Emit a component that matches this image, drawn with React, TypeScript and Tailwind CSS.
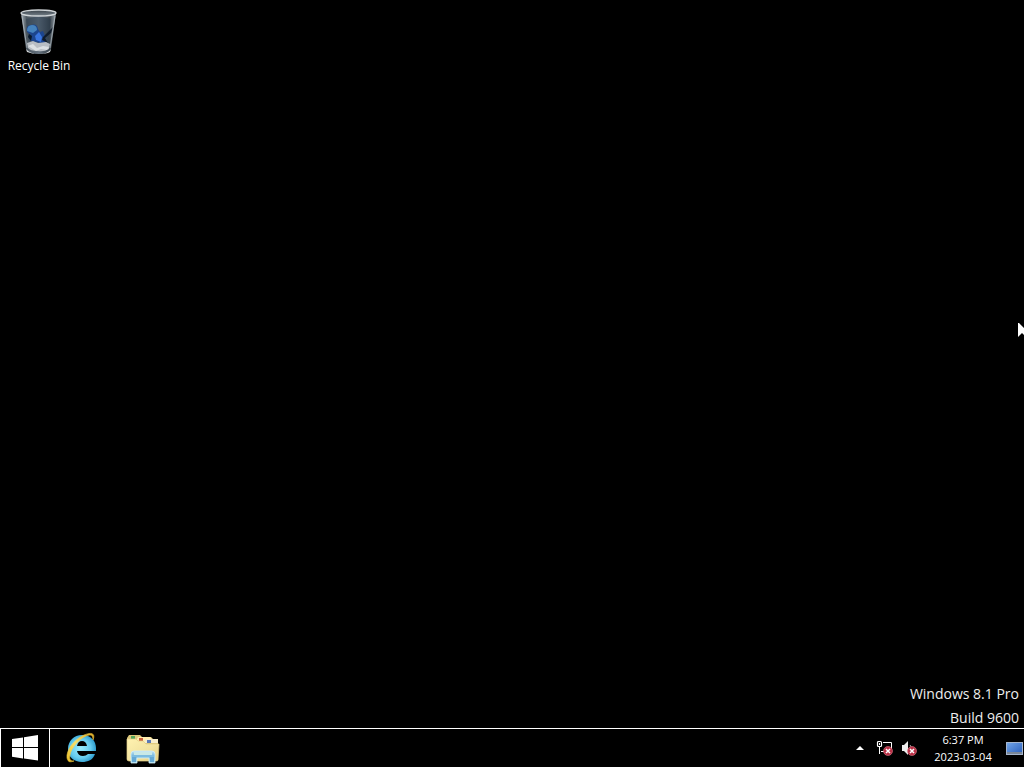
import React from "react";

function RecycleBinIcon() {
  return (
    <svg width="48" height="48" viewBox="0 0 48 48" aria-hidden="true">
      <defs>
        <linearGradient id="glass" x1="0" x2="1" y1="0" y2="0">
          <stop offset="0" stopColor="#a3adb5" />
          <stop offset="0.16" stopColor="#4b565f" />
          <stop offset="0.5" stopColor="#65727f" />
          <stop offset="0.82" stopColor="#39434c" />
          <stop offset="1" stopColor="#9aa4ab" />
        </linearGradient>
        <linearGradient id="inner" x1="0" x2="0" y1="0" y2="1">
          <stop offset="0" stopColor="#39424a" />
          <stop offset="1" stopColor="#77828b" />
        </linearGradient>
      </defs>
      <path d="M6 7 L11 43 Q12 48 24 48 Q35 48 36 43 L41 7Z" fill="url(#glass)" />
      <path d="M11 13 L24 10 36 13 33 39H14Z" fill="#24384a" opacity=".4" />
      <path d="M12 26 Q10 20 16 19 Q22 17 23 23 L25 26 28 25 30 30 31 36 26 38 22 36 19 37 15 34 16 29Z" fill="#1c458d" />
      <path d="M12 25 Q12 19 17 19 Q22 19 22 24 L18 27Z" fill="#4583bd" />
      <path d="M20 30 L24 26 27 31 26 36 21 34Z" fill="#3975df" />
      <path d="M28 31 L38 21 36 27 30 32 33 37 27 34Z" fill="#101c2a" />
      <path d="M14 28l3 2-1 5-3-4Z" fill="#08182b" />
      <path d="M12 37 L18 35 23 37 31 36 35 38 34 43 Q29 46 23 45 Q15 45 13 42Z" fill="#b9bec4" />
      <path d="M13 40l5-2 4 4 6-2 6 1-2 3-6-1-5 2Z" fill="#e5e8eb" opacity=".8" />
      <path d="M11 43Q15 48 24 48T36 43L35 46Q31 48 24 48T12 46Z" fill="#d5d8da" />
      <ellipse cx="23.5" cy="7" rx="17.5" ry="3" fill="url(#inner)" stroke="#d0d5d8" strokeWidth="1.3" />
      <path d="M7 10 L12 42M40 10 L35 42" stroke="#b4bdc3" strokeWidth="1" opacity=".7" />
    </svg>
  );
}

function WindowsLogo() {
  return (
    <svg width="26" height="26" viewBox="0 0 26 26" fill="white" aria-hidden="true">
      <path d="M0 4 L11 2.4V12H0Z M12 2.2 L26 0V12H12Z M0 13H11V23.4L0 21.8Z M12 13H26V25.5L12 23.5Z" />
    </svg>
  );
}

function ExplorerLogo() {
  return (
    <svg width="32" height="32" viewBox="0 0 32 32" aria-hidden="true">
      <defs>
        <radialGradient id="ieBlue" cx=".45" cy=".5" r=".6">
          <stop offset="0" stopColor="#9cecfd" />
          <stop offset="0.6" stopColor="#66ccef" />
          <stop offset="1" stopColor="#2290c4" />
        </radialGradient>
        <linearGradient id="ieGold" x1="0" x2="1" y1="1" y2="0">
          <stop offset="0" stopColor="#e9bd28" />
          <stop offset="0.5" stopColor="#f8e069" />
          <stop offset="1" stopColor="#dcaa25" />
        </linearGradient>
      </defs>
      <path fillRule="evenodd" fill="url(#ieBlue)" d="M17 3C26 3 31 9 31 16V19H12Q13 24 18 24Q21 24 23 22H30C28 28 23 30 17 30C9 30 3 25 3 17S9 3 17 3ZM12 14H22Q21 9 17 9T12 14Z" />
      <path d="M28 8C31 1 26 0 19 3C8 8 1 19 2 26C3 31 6 30 9 29C5 29 4 27 5 23C6 16 14 7 21 4C26 2 28 3 28 8Z" fill="url(#ieGold)" stroke="url(#ieGold)" strokeWidth=".6" />
    </svg>
  );
}

function FolderIcon() {
  return (
    <svg width="34" height="32" viewBox="0 0 34 32" aria-hidden="true">
      <defs>
        <linearGradient id="folder" x1="0" x2="1" y1="0" y2="1">
          <stop offset="0" stopColor="#fff2b0" />
          <stop offset="0.55" stopColor="#f2e3a0" />
          <stop offset="1" stopColor="#e5cf80" />
        </linearGradient>
        <linearGradient id="stand" x1="0" x2="0" y1="0" y2="1">
          <stop offset="0" stopColor="#c4e5f3" />
          <stop offset="0.4" stopColor="#78b9df" />
          <stop offset="1" stopColor="#a9dced" />
        </linearGradient>
      </defs>
      <path d="M1 5L3 2H14L16 4H25L27 6H32V27H1Z" fill="#dcc87c" />
      <path d="M5 3H9V6H5Z" fill="#55a55a" />
      <path d="M10 8L12 4H24L26 6H32V10H10Z" fill="#ffedaf" />
      <path d="M13 5H17V8H13Z" fill="#c95c3a" />
      <path d="M18 10L20 6H32V10H18Z" fill="#f7edcc" />
      <path d="M21 7H25V10H21Z" fill="#5b79b6" />
      <path d="M1 6H10L12 8H17L20 11H33L32 27Q32 28 30 28H3Q1 28 1 26Z" fill="url(#folder)" stroke="#e3cf87" strokeWidth=".7" />
      <path d="M5 30V21Q5 18 8 18H26Q29 18 29 21V30H23V25H11V30Z" fill="url(#stand)" stroke="#d2eff7" strokeWidth=".8" />
      <path d="M8 19H26V22H8Z" fill="#c9e9e7" />
      <path d="M6 24H10V29H6ZM24 24H28V29H24Z" fill="#65a9d5" />
    </svg>
  );
}

function ErrorBadge() {
  return (
    <g>
      <circle cx="12" cy="11" r="4.5" fill="#b92f45" stroke="#dc7b88" strokeWidth=".6" />
      <path d="M10 9l4 4m0-4l-4 4" stroke="#fff" strokeWidth="1.5" />
    </g>
  );
}

function NetworkIcon() {
  return (
    <svg width="17" height="16" viewBox="0 0 17 16" aria-hidden="true">
      <path d="M7 2.5H15.5V11M5 11.5H9M3.5 6V14" fill="none" stroke="white" />
      <rect x="1.5" y="1.5" width="4" height="5" rx="1" fill="black" stroke="white" strokeWidth="1.2" />
      <path d="M3.5 3V5" stroke="white" />
      <ErrorBadge />
    </svg>
  );
}

function VolumeIcon() {
  return (
    <svg width="17" height="16" viewBox="0 0 17 16" aria-hidden="true">
      <path d="M2 5H4V11H2Z M4 5L8 1V15L4 11Z" fill="#eee" />
      <path d="M10 5Q11 6 11 8" fill="none" stroke="#aaa" />
      <ErrorBadge />
    </svg>
  );
}

function DesktopIcon() {
  return (
    <svg width="17" height="14" viewBox="0 0 17 14" aria-hidden="true">
      <defs>
        <linearGradient id="screen" x1="0" x2="1" y1="0" y2="1">
          <stop offset="0" stopColor="#72a5e8" />
          <stop offset="1" stopColor="#285cb9" />
        </linearGradient>
      </defs>
      <rect x=".5" y=".5" width="16" height="12" fill="url(#screen)" stroke="#a5b5cd" />
      <path d="M1 11H16" stroke="#7a8798" strokeWidth="2" />
    </svg>
  );
}

export default function App() {
  return (
    <div className="relative flex min-h-screen flex-col overflow-hidden bg-black font-['Open_Sans','Noto_Sans',sans-serif] text-white">
      <main className="flex flex-1 flex-col items-start justify-between">
        <button className="flex w-[78px] flex-col items-center pt-[6px] text-xs leading-4">
          <RecycleBinIcon />
          <span className="mt-1 whitespace-nowrap">Recycle Bin</span>
        </button>
        <div className="-mb-[2px] self-end pr-[5px] text-right text-sm leading-6 text-[#eeeeee]">
          <p>Windows 8.1 Pro</p>
          <p>Build 9600</p>
        </div>
      </main>
      <footer className="flex h-10 items-stretch border-y border-l border-white">
        <button aria-label="Start" className="flex w-[49px] items-center justify-center border-r border-white">
          <WindowsLogo />
        </button>
        <nav aria-label="Taskbar" className="flex flex-1">
          <button aria-label="Internet Explorer" className="flex w-[62px] items-center justify-center">
            <ExplorerLogo />
          </button>
          <button aria-label="File Explorer" className="flex w-[62px] items-center justify-center pt-[2px]">
            <FolderIcon />
          </button>
        </nav>
        <div className="flex items-center">
          <button aria-label="Show hidden icons" className="flex w-6 justify-center">
            <svg width="8" height="5" viewBox="0 0 8 5" fill="white" aria-hidden="true"><path d="M0 4L4 0 8 4Z" /></svg>
          </button>
          <button aria-label="Network" className="flex w-6 justify-center"><NetworkIcon /></button>
          <button aria-label="Volume" className="flex w-6 justify-center"><VolumeIcon /></button>
          <button className="flex w-[86px] flex-col items-center text-[11px] leading-[17px]">
            <time>6:37 PM</time>
            <time dateTime="2023-03-04">2023-03-04</time>
          </button>
          <button aria-label="Show desktop" className="flex w-[18px] pt-[2px]"><DesktopIcon /></button>
        </div>
      </footer>
      <svg className="pointer-events-none absolute right-0 top-[42%] h-5 w-[6px]" viewBox="0 0 6 20" aria-hidden="true">
        <path d="M0 -1L6 5V12L4 10 0 14Z" fill="white" />
      </svg>
    </div>
  );
}
